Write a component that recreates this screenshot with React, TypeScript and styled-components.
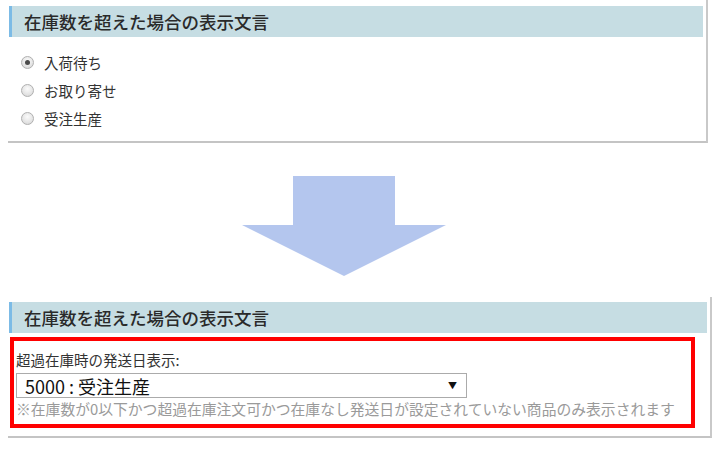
import styled, { createGlobalStyle } from 'styled-components';

// ─── Global ───────────────────────────────────────────────────────────────────

const GlobalStyle = createGlobalStyle`
  html, body {
    margin: 0;
    padding: 0;
    background: #ffffff;
  }
  body {
    font-family: "Noto Sans CJK JP", "Noto Sans", sans-serif;
    color: #333333;
  }
`;

// ─── Styled components ────────────────────────────────────────────────────────

const Page = styled.div`
  width: 715px;
  height: 455px;
  overflow: hidden;
  padding-left: 8px;
  box-sizing: border-box;
`;

const Panel = styled.section<{ $width: number; $padTop: number }>`
  width: ${({ $width }) => $width}px;
  box-sizing: border-box;
  padding-top: ${({ $padTop }) => $padTop}px;
  border-right: 2px solid #c9c9c9;
  border-bottom: 2px solid #c4c4c4;
  background: #ffffff;
`;

const PanelHeader = styled.h3`
  margin: 0 3px 0 1px;
  height: 31px;
  display: flex;
  align-items: center;
  padding-left: 12px;
  border-left: 3px solid #7cbbe6;
  background: #c6dde3;
  font-size: 17.5px;
  font-weight: 500;
  color: #2a2a2a;
  line-height: 1;
`;

const RadioList = styled.ul`
  list-style: none;
  margin: 11px 0 0;
  padding: 0 0 9px 13px;
`;

const RadioRow = styled.li`
  height: 28px;
  display: flex;
  align-items: center;
  gap: 10px;
  font-size: 14.5px;
  color: #333333;
`;

const RadioMark = styled.span<{ $checked?: boolean }>`
  width: 13px;
  height: 13px;
  border-radius: 50%;
  box-sizing: border-box;
  border: 1px solid #b0b0b0;
  background: radial-gradient(circle at 50% 35%, #fbfbfb 0%, #e2e2e2 65%, #cfcfcf 100%);
  display: flex;
  align-items: center;
  justify-content: center;

  &::after {
    content: '';
    display: ${({ $checked }) => ($checked ? 'block' : 'none')};
    width: 5px;
    height: 5px;
    border-radius: 50%;
    background: #4a4a4a;
  }
`;

const ArrowWrap = styled.div`
  padding: 33px 0 21px 234px;
  line-height: 0;
`;

const Highlight = styled.div`
  margin: 4px 0 8px 2px;
  width: 685px;
  box-sizing: border-box;
  border: 4px solid #ff0000;
  padding: 9px 2px 5px 2px;
`;

const FieldLabel = styled.div`
  font-size: 14.5px;
  line-height: 20px;
  color: #333333;
  margin-bottom: 3px;
`;

const SelectBox = styled.div`
  width: 451px;
  height: 25px;
  box-sizing: border-box;
  border: 1px solid #ababab;
  display: flex;
  align-items: center;
  justify-content: space-between;
  padding: 0 9px 0 8px;
  font-size: 18px;
  color: #111111;
  background: #ffffff;
`;

const Caret = styled.span`
  font-size: 9px;
  color: #111111;
`;

const Note = styled.p`
  margin: 1px 0 0;
  font-size: 14.8px;
  line-height: 20px;
  color: #9a9a9a;
  white-space: nowrap;
`;

// ─── Sub-components ───────────────────────────────────────────────────────────

const TITLE = '在庫数を超えた場合の表示文言';

const options = [
  { label: '入荷待ち', checked: true },
  { label: 'お取り寄せ', checked: false },
  { label: '受注生産', checked: false },
];

function DownArrow() {
  return (
    <svg width="204" height="100" viewBox="0 0 204 100">
      <polygon points="51,0 153,0 153,49 204,49 102,100 0,49 51,49" fill="#b4c6ee" />
    </svg>
  );
}

// ─── Page ─────────────────────────────────────────────────────────────────────

export default function App() {
  return (
    <>
      <GlobalStyle />
      <Page>
        <Panel $width={700} $padTop={6}>
          <PanelHeader>{TITLE}</PanelHeader>
          <RadioList>
            {options.map((o) => (
              <RadioRow key={o.label}>
                <RadioMark $checked={o.checked} />
                {o.label}
              </RadioRow>
            ))}
          </RadioList>
        </Panel>

        <ArrowWrap>
          <DownArrow />
        </ArrowWrap>

        <Panel $width={704} $padTop={5}>
          <PanelHeader>{TITLE}</PanelHeader>
          <Highlight>
            <FieldLabel>超過在庫時の発送日表示:</FieldLabel>
            <SelectBox>
              <span>5000&nbsp;:&nbsp;受注生産</span>
              <Caret>▼</Caret>
            </SelectBox>
            <Note>※在庫数が0以下かつ超過在庫注文可かつ在庫なし発送日が設定されていない商品のみ表示されます</Note>
          </Highlight>
        </Panel>
      </Page>
    </>
  );
}
